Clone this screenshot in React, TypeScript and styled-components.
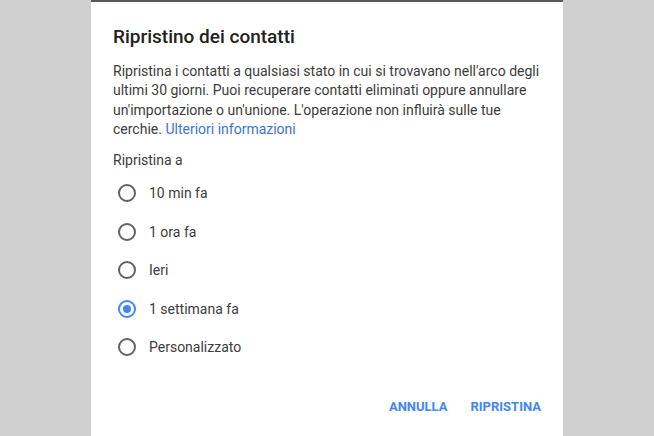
import styled, { createGlobalStyle } from 'styled-components';

const GlobalStyle = createGlobalStyle`
    html, body {
        margin: 0;
        padding: 0;
        background: #cfcfcf;
        font-family: Roboto, "Liberation Sans", Arial, sans-serif;
    }
`;

const Page = styled.div`
    display: flex;
    justify-content: center;
    height: 436px;
    overflow: hidden;
`;

const Dialog = styled.div`
    width: 472px;
    background: #ffffff;
    border-top: 2px solid #595959;
    padding: 25px 22px 0 22px;
    box-sizing: border-box;
    display: flex;
    flex-direction: column;
`;

const Title = styled.h2`
    margin: 0;
    font-size: 19px;
    font-weight: 500;
    color: #212121;
    line-height: 20px;
`;

const Description = styled.p`
    margin: 15px 0 0 0;
    font-size: 14px;
    line-height: 19.3px;
    color: #3c3c3c;
`;

const Link = styled.a`
    color: #3b73d9;
    text-decoration: none;
`;

const GroupLabel = styled.div`
    margin-top: 11px;
    font-size: 14px;
    line-height: 20px;
    color: #3c3c3c;
`;

const Options = styled.div`
    display: flex;
    flex-direction: column;
    margin-top: 4px;
`;

const Option = styled.label`
    display: flex;
    align-items: center;
    gap: 13px;
    height: 38.5px;
    padding-left: 5px;
    font-size: 14px;
    color: #3c3c3c;
`;

const Radio = styled.span<{ $checked?: boolean }>`
    width: 18px;
    height: 18px;
    box-sizing: border-box;
    border-radius: 50%;
    border: 2px solid ${p => (p.$checked ? '#4285f4' : '#5f6368')};
    display: flex;
    align-items: center;
    justify-content: center;

    &::after {
        content: '';
        width: 8px;
        height: 8px;
        border-radius: 50%;
        background: #4285f4;
        display: ${p => (p.$checked ? 'block' : 'none')};
    }
`;

const Actions = styled.div`
    display: flex;
    justify-content: flex-end;
    gap: 23px;
    margin-top: 32px;
`;

const ActionButton = styled.button`
    border: none;
    background: none;
    padding: 0;
    font-family: inherit;
    font-size: 13px;
    font-weight: 700;
    color: #4285f4;
    text-transform: uppercase;
    cursor: pointer;
`;

const options = ['10 min fa', '1 ora fa', 'Ieri', '1 settimana fa', 'Personalizzato'];

export default function App() {
    return (
        <>
            <GlobalStyle />
            <Page>
                <Dialog>
                    <Title>Ripristino dei contatti</Title>
                    <Description>
                        Ripristina i contatti a qualsiasi stato in cui si trovavano nell'arco degli ultimi 30
                        giorni. Puoi recuperare contatti eliminati oppure annullare un'importazione o un'unione.
                        L'operazione non influirà sulle tue cerchie. <Link href="#">Ulteriori informazioni</Link>
                    </Description>
                    <GroupLabel>Ripristina a</GroupLabel>
                    <Options>
                        {options.map(option => (
                            <Option key={option}>
                                <Radio $checked={option === '1 settimana fa'} />
                                {option}
                            </Option>
                        ))}
                    </Options>
                    <Actions>
                        <ActionButton>Annulla</ActionButton>
                        <ActionButton>Ripristina</ActionButton>
                    </Actions>
                </Dialog>
            </Page>
        </>
    );
}
